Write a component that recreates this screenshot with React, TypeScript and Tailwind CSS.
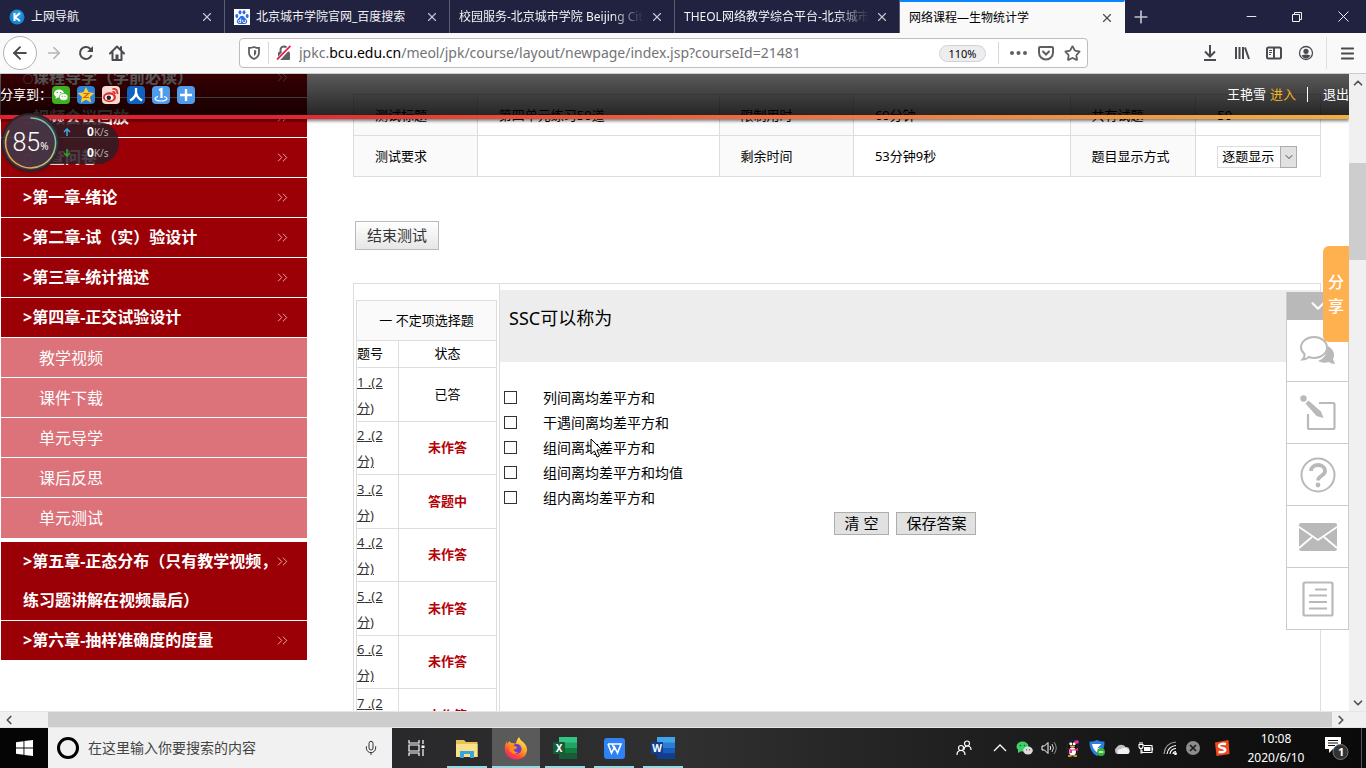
import React, { useState } from 'react';
import {
  ArrowLeft,
  ArrowRight,
  ChevronDown,
  ChevronLeft,
  ChevronRight,
  ChevronUp,
  ChevronsRight,
  Menu,
  Mic,
  Minus,
  Plus,
  Star,
  X,
} from 'lucide-react';

const TABS = [
  { id: 'nav', title: '上网导航', icon: 'k' },
  { id: 'baidu', title: '北京城市学院官网_百度搜索', icon: 'baidu' },
  { id: 'campus', title: '校园服务-北京城市学院 Beijing City' },
  { id: 'theol', title: 'THEOL网络教学综合平台-北京城市' },
  { id: 'course', title: '网络课程—生物统计学' },
];

const MENU_TOP = [
  '○课程导学（学前必读）',
  '○视频会议回放',
  '○调查问卷',
  '>第一章-绪论',
  '>第二章-试（实）验设计',
  '>第三章-统计描述',
  '>第四章-正交试验设计',
];
const MENU_SUB = ['教学视频', '课件下载', '单元导学', '课后反思', '单元测试'];
const MENU_BOTTOM = ['>第五章-正态分布（只有教学视频，练习题讲解在视频最后）', '>第六章-抽样准确度的度量'];

const QUESTIONS = [
  { id: 1, status: '已答' },
  { id: 2, status: '未作答' },
  { id: 3, status: '答题中' },
  { id: 4, status: '未作答' },
  { id: 5, status: '未作答' },
  { id: 6, status: '未作答' },
  { id: 7, status: '未作答' },
];

const OPTIONS = [
  '列间离均差平方和',
  '干遇间离均差平方和',
  '组间离均差平方和',
  '组间离均差平方和均值',
  '组内离均差平方和',
];

function TabIcon({ name }: { name: string }) {
  if (name === 'k') {
    return (
      <svg width="16" height="16" viewBox="0 0 16 16" className="shrink-0">
        <circle cx="8" cy="8" r="7.5" fill="#1787d4" />
        <circle cx="8" cy="6" r="5" fill="#3aa7ea" opacity="0.5" />
        <path d="M5.5 4v8M11 4L6 8.2L11 12" stroke="#fff" strokeWidth="2" fill="none" />
      </svg>
    );
  }
  return (
    <svg width="16" height="16" viewBox="0 0 16 16" className="shrink-0">
      <rect width="16" height="16" fill="#fff" />
      <g fill="#2c6be0">
        <ellipse cx="2.8" cy="7" rx="1.5" ry="2" />
        <ellipse cx="6" cy="3.3" rx="1.5" ry="2.1" />
        <ellipse cx="10" cy="3.3" rx="1.5" ry="2.1" />
        <ellipse cx="13.2" cy="7" rx="1.5" ry="2" />
        <path d="M8 6.800c1.600 0 2.200 1.400 3.400 2.600c1.300 1.200 2.100 2.200 1.700 3.800c-.5 1.800-2.600 1.900-5.100 1.700c-2.500.2-4.600.1-5.100-1.700c-.4-1.600.4-2.600 1.700-3.800C5.800 8.200 6.400 6.800 8 6.800z" />
      </g>
      <path d="M6.700 9.500v4M6.700 11.200h-1.400q-.9 0-.9 1.200t.9 1.100h1.400M8.800 10.900v1.800q0 .8.800.8h1.700v-2.600" stroke="#fff" strokeWidth="0.9" fill="none" />
    </svg>
  );
}

function TabBar() {
  return (
    <div className="h-[33px] shrink-0 bg-[#20223f] flex text-xs text-[#f3f3f6]">
      {TABS.map((tab) => {
        const active = tab.id === 'course';
        return (
          <div
            key={tab.id}
            className={`w-[225px] min-w-0 flex items-center gap-[6px] pl-[9px] pr-[10px] border-r ${
              active ? 'bg-[#f9f9fa] text-black border-t-2 border-t-[#0a84ff] border-r-[#f9f9fa]' : 'border-r-[#5c5d73]'
            }`}
          >
            {tab.icon && <TabIcon name={tab.icon} />}
            <span
              className={`flex-1 overflow-hidden whitespace-nowrap ${
                active || tab.icon ? '' : '[mask-image:linear-gradient(to_right,black_82%,transparent)]'
              }`}
            >
              {tab.title}
            </span>
            <button aria-label="关闭标签页">
              <X size={14} strokeWidth={2} className={active ? 'text-[#4a4a4f]' : 'text-[#c4c4cc]'} />
            </button>
          </div>
        );
      })}
      <button aria-label="新标签页" className="w-8 flex items-center justify-center">
        <Plus size={20} strokeWidth={2} className="text-[#c4c4cc]" />
      </button>
      <div className="ml-auto flex">
        <button aria-label="最小化" className="w-[46px] flex items-center justify-center">
          <Minus size={15} strokeWidth={1.5} />
        </button>
        <button aria-label="还原" className="w-[46px] flex items-center justify-center">
          <svg width="10" height="10" viewBox="0 0 10 10" fill="none" stroke="currentColor">
            <path d="M.5 2.500h7v7h-7zM2.500 2.500v-2h7v7h-2" />
          </svg>
        </button>
        <button aria-label="关闭" className="w-[46px] flex items-center justify-center">
          <svg width="11" height="11" viewBox="0 0 11 11" stroke="currentColor">
            <path d="M.5.5l10 10M10.500.5l-10 10" />
          </svg>
        </button>
      </div>
    </div>
  );
}

function ToolBar() {
  return (
    <div className="h-[41px] shrink-0 bg-[#f9f9fa] border-b border-[#ccc] flex items-center text-[#4a4a4f]">
      <div className="w-[239px] shrink-0 flex items-center gap-4 pl-[3px]">
        <button aria-label="后退" className="size-[34px] rounded-full border border-[#b1b1b1] bg-white flex items-center justify-center">
          <ArrowLeft size={20} strokeWidth={2.3} />
        </button>
        <div className="flex items-center gap-[15px] -ml-2">
          <button aria-label="前进" className="text-[#b5b5b8]">
            <ArrowRight size={18} strokeWidth={2.3} />
          </button>
          <button aria-label="刷新">
            <svg width="16" height="16" viewBox="0 0 16 16" fill="none" stroke="currentColor" strokeWidth="2">
              <path d="M13.600 10.200A6 6 0 1 1 12.200 3.700L14 5.500" />
              <path d="M15 1v6H9z" fill="currentColor" stroke="none" />
            </svg>
          </button>
          <button aria-label="主页">
            <svg width="16" height="16" viewBox="0 0 16 16" fill="none" stroke="currentColor" strokeWidth="2" strokeLinejoin="round" strokeLinecap="round">
              <path d="M1 8.500L8 1.500l7 7M3.500 7.500V15h9V7.500" />
              <path d="M6.500 9.500h3V15h-3z" fill="currentColor" stroke="none" />
              <path d="M12 2v3" />
            </svg>
          </button>
        </div>
      </div>

      <div className="flex-1 min-w-0 h-[30px] bg-white border border-[#bdbdc0] rounded-sm flex items-center pl-[7px]">
        <svg width="14" height="14" viewBox="0 0 14 14" fill="none" stroke="#5f5f63" className="shrink-0">
          <path d="M7 1c2 .8 3.500 1 5 1v4.500c0 3-2 5.200-5 6.500c-3-1.300-5-3.500-5-6.500V2c1.500 0 3-.2 5-1z" strokeWidth="1.800" />
          <path d="M7 4c.8.300 1.500.4 2.200.4v2.100c0 1.500-.8 2.700-2.200 3.500z" fill="#5f5f63" stroke="none" />
        </svg>
        <span className="w-px h-[22px] bg-[#d7d7db] mx-[7px]" />
        <svg width="16" height="16" viewBox="0 0 16 16" fill="none" className="shrink-0">
          <rect x="2" y="7" width="12" height="8" rx="1" fill="#5f5f63" />
          <path d="M4.500 7V5a3.500 3.500 0 0 1 7 0v2" stroke="#5f5f63" strokeWidth="2" />
          <path d="M1.500 15L14.500 1" stroke="#fff" strokeWidth="4" />
          <path d="M1 14.500L14.500 .8" stroke="#e22850" strokeWidth="1.800" />
        </svg>
        {/* the host name is drawn darker than the rest, so the value is shown by the label */}
        <label className="ml-[7px] flex-1 whitespace-nowrap overflow-hidden text-sm text-[#737377]">
          jpkc.<span className="text-black">bcu.edu.cn</span>/meol/jpk/course/layout/newpage/index.jsp?courseId=21481
          <input type="url" className="sr-only" />
        </label>
        <button className="w-[47px] h-[17px] rounded-full border border-[#d2d2d5] bg-[#ededf0] text-[11px] leading-[15px] text-black">110%</button>
        <span className="w-px h-[22px] bg-[#d7d7db] ml-3 mr-[11px]" />
        <button aria-label="更多" className="mr-[7px]">
          <svg width="17" height="4" viewBox="0 0 17 4" fill="#5f5f63">
            <circle cx="2" cy="2" r="2" /><circle cx="8.5" cy="2" r="2" /><circle cx="15" cy="2" r="2" />
          </svg>
        </button>
        <button aria-label="Pocket" className="mx-1">
          <svg width="16" height="15" viewBox="0 0 16 15" fill="none" stroke="#5f5f63" strokeWidth="2" strokeLinecap="round">
            <path d="M2 1h12q1 0 1 1v4.500a7 7 0 0 1-14 0V2q0-1 1-1z" />
            <path d="M5 5.500l3 3l3-3" />
          </svg>
        </button>
        <button aria-label="收藏" className="mx-[6px]">
          <Star size={17} strokeWidth={2.5} className="text-[#5f5f63]" />
        </button>
      </div>

      <div className="flex items-center gap-4 pl-[114px] pr-[10px]">
        <button aria-label="下载">
          <svg width="16" height="16" viewBox="0 0 16 16" fill="none" stroke="currentColor" strokeWidth="2">
            <path d="M8 0v11M3 6.500l5 5l5-5M2 15h12" />
          </svg>
        </button>
        <button aria-label="书库">
          <svg width="16" height="16" viewBox="0 0 16 16" fill="none" stroke="currentColor" strokeWidth="2">
            <path d="M2 2v12M5.500 2v12M9 2v12M11 2.500l4 11.500" />
          </svg>
        </button>
        <button aria-label="侧栏">
          <svg width="16" height="16" viewBox="0 0 16 16" fill="none" stroke="currentColor" strokeWidth="2">
            <rect x="1" y="2.500" width="14" height="11" rx="1.5" />
            <path d="M8 2.500v11" />
            <path d="M3 5.500h3M3 7.500h3M3 9.500h2" strokeWidth="1" />
          </svg>
        </button>
        <button aria-label="账户">
          <svg width="16" height="16" viewBox="0 0 16 16" fill="none">
            <circle cx="8" cy="8" r="6.5" stroke="#4a4a4f" strokeWidth="1.3" />
            <circle cx="8" cy="6.3" r="2.600" fill="#4a4a4f" />
            <path d="M3.500 10.500q4.500-2 9 0q-1.800 3-4.500 3t-4.500-3z" fill="#4a4a4f" />
          </svg>
        </button>
        <div className="flex items-center gap-3 -ml-1">
          <span className="w-px h-8 bg-[#dedee0]" />
          <button aria-label="打开菜单">
            <Menu size={17} strokeWidth={2.6} />
          </button>
        </div>
      </div>
    </div>
  );
}

function MenuRow({ label }: { label: string }) {
  const bullet = label.startsWith('○');
  return (
    <li className="bg-[#9b0007] border-b border-white last:border-b-0">
      <a href="#" className="flex items-start justify-between pl-[22px] pr-4 font-bold text-white">
        <span className="flex-1 -mr-2">
          {bullet && <span className="text-[10px] leading-none font-normal">○</span>}
          {bullet ? label.slice(1) : label}
        </span>
        <ChevronsRight size={17} strokeWidth={1.4} className="mt-[11px] shrink-0 text-[#f0a8a8]" />
      </a>
    </li>
  );
}

function Sidebar() {
  return (
    <nav className="w-[307px] shrink-0 pl-px text-base">
      <ul className="leading-[39px] border-b border-white">
        {MENU_TOP.map((label) => (
          <MenuRow key={label} label={label} />
        ))}
      </ul>
      <ul className="pb-1">
        {MENU_SUB.map((label) => (
          <li key={label} className="h-10 bg-[#dc727a] border-b border-white last:border-b-0">
            <a href="#" className="block pl-[38px] leading-10 text-white">{label}</a>
          </li>
        ))}
      </ul>
      <ul className="leading-[39px]">
        {MENU_BOTTOM.map((label) => (
          <MenuRow key={label} label={label} />
        ))}
      </ul>
    </nav>
  );
}

function InfoTable() {
  const label = 'border border-[#ddd] bg-[#fafafa] pl-[21px] pt-[2px] font-normal text-left';
  const value = 'border border-[#ddd] pl-[21px] pt-[2px]';
  return (
    <table className="w-full table-fixed border-collapse text-[13px]">
      <colgroup>
        <col className="w-[12.8%]" />
        <col className="w-1/4" />
        <col className="w-[13.9%]" />
        <col className="w-[22.4%]" />
        <col className="w-[13%]" />
        <col />
      </colgroup>
      <tbody>
        <tr className="h-[41px]">
          <th className={label}>测试标题</th>
          <td className={value}>第四单元练习50道</td>
          <th className={label}>限制用时</th>
          <td className={value}>60分钟</td>
          <th className={label}>共有试题</th>
          <td className={value}>50</td>
        </tr>
        <tr className="h-[41px]">
          <th className={label}>测试要求</th>
          <td className={value} />
          <th className={label}>剩余时间</th>
          <td className={value}>53分钟9秒</td>
          <th className={label}>题目显示方式</th>
          <td className={value}>
            <div className="relative w-20 h-[22px]">
              <select aria-label="题目显示方式" className="appearance-none w-full h-full border border-[#ddd] bg-white pl-1">
                <option>逐题显示</option>
                <option>全部显示</option>
              </select>
              <span className="absolute right-0 top-0 w-[17px] h-full border border-[#adadad] bg-[#e1e1e1] flex items-center justify-center pointer-events-none">
                <ChevronDown size={12} strokeWidth={2} className="text-[#444]" />
              </span>
            </div>
          </td>
        </tr>
      </tbody>
    </table>
  );
}

function QuestionList() {
  return (
    <table className="w-[141px] table-fixed border-collapse text-[13px]">
      <colgroup>
        <col className="w-[42px]" />
        <col />
      </colgroup>
      <thead>
        <tr className="h-10">
          <th colSpan={2} className="border border-[#ddd] bg-[#fafafa] font-normal">一 不定项选择题</th>
        </tr>
        <tr className="h-[27px]">
          <th className="border border-[#ddd] font-normal text-left">题号</th>
          <th className="border border-[#ddd] font-normal">状态</th>
        </tr>
      </thead>
      <tbody>
        {QUESTIONS.map((q) => (
          <tr key={q.id} className="odd:h-[54px] even:h-[53px]">
            <td className="border border-[#ddd] leading-[26px]">
              <a href="#" className="underline text-[#333]">{q.id} .(2<br />分)</a>
            </td>
            <td className={`border border-[#ddd] text-center ${q.status === '已答' ? '' : 'font-bold text-[#b50006]'}`}>
              {q.status}
            </td>
          </tr>
        ))}
      </tbody>
    </table>
  );
}

function TestPanel() {
  const [checked, setChecked] = useState<string[]>([]);

  const toggle = (option: string) =>
    setChecked((prev) => (prev.includes(option) ? prev.filter((o) => o !== option) : [...prev, option]));

  return (
    <section className="mt-[33px] flex border border-[#ddd]">
      <div className="shrink-0 border-r border-[#ddd] pt-4 px-[2px]">
        <QuestionList />
      </div>
      <div className="flex-1 pt-[6px]">
        <h2 className="h-[72px] bg-[#ededed] pl-[9px] pt-[15px] text-lg leading-[26px]">SSC可以称为</h2>
        <div className="mt-[23px] pl-1 text-sm">
          {OPTIONS.map((option) => (
            <label key={option} className="h-[25px] flex items-center gap-[26px]">
              <input
                type="checkbox"
                className="appearance-none size-[13px] border border-[#333] bg-white checked:bg-[#333]"
                checked={checked.includes(option)}
                onChange={() => toggle(option)}
              />
              {option}
            </label>
          ))}
        </div>
        <div className="mt-[2px] pr-[10px] flex justify-center gap-[7px] text-[15px] leading-[21px]">
          <button onClick={() => setChecked([])} className="border border-[#adadad] bg-[#e1e1e1] px-[10px]">清 空</button>
          <button className="border border-[#adadad] bg-[#e1e1e1] px-[9px]">保存答案</button>
        </div>
      </div>
    </section>
  );
}

function ShareIcons() {
  const box = 'size-[18px] rounded-sm overflow-hidden';
  return (
    <div className="flex gap-[7px]">
      <svg viewBox="0 0 18 18" className={box}>
        <rect width="18" height="18" fill="#3eb022" />
        <ellipse cx="7" cy="7.5" rx="5" ry="4" fill="#fff" /><path d="M4 10l-.5 3l3-2z" fill="#fff" />
        <ellipse cx="11.7" cy="11" rx="4.3" ry="3.5" fill="#fff" stroke="#3eb022" strokeWidth=".7" />
        <g fill="#3eb022"><circle cx="5.3" cy="6.5" r=".8" /><circle cx="8.6" cy="6.5" r=".8" /><circle cx="10.3" cy="10.3" r=".6" /><circle cx="13" cy="10.3" r=".6" /></g>
      </svg>
      <svg viewBox="0 0 18 18" className={box}>
        <rect width="18" height="18" fill="#2b82d9" />
        <path d="M9 1l2.500 5.300l5.800.7l-4.300 3.900l1.200 5.800L9 13.800l-5.200 2.900l1.200-5.800L.7 7l5.800-.7z" fill="#fc3" />
        <path d="M6.500 7.500h5L7 11.500h5" stroke="#c86a10" strokeWidth="1.2" fill="none" />
      </svg>
      <svg viewBox="0 0 18 18" className={box}>
        <rect width="18" height="18" fill="#f6dad3" />
        <ellipse cx="7.5" cy="11.3" rx="6.500" ry="5" fill="#e0332c" />
        <ellipse cx="7.3" cy="11.5" rx="4.3" ry="3" fill="#fff" />
        <circle cx="6.8" cy="11.7" r="2.200" fill="#222" />
        <path d="M10.500 3q5-1 5 5M10.500 6q2.500-.5 2.500 2" stroke="#e0332c" strokeWidth="1.8" fill="none" />
      </svg>
      <svg viewBox="0 0 18 18" className={box}>
        <rect width="18" height="18" fill="#0f62c0" />
        <path d="M9 2v5q-.5 4.500-6 7.500M9.200 7q1 5 5.800 7.500" stroke="#fff" strokeWidth="2.3" fill="none" />
      </svg>
      <svg viewBox="0 0 18 18" className={box}>
        <rect width="18" height="18" fill="#4f9bec" />
        <path d="M7 4l2.500-1v9" stroke="#fff" strokeWidth="2.2" fill="none" />
        <path d="M6 10.500q-3 .8-3 2.200q.3 2.300 6 2.300t6-2.300q0-1.400-3-2.200" stroke="#fff" strokeWidth="1.2" fill="none" />
      </svg>
      <svg viewBox="0 0 18 18" className={box}>
        <rect width="18" height="18" fill="#4f9bec" />
        <path d="M9 3v12M3 9h12" stroke="#fff" strokeWidth="2.4" />
      </svg>
    </div>
  );
}

function PageHeader() {
  return (
    <header className="absolute inset-x-0 top-0 z-10 shadow-[0_2px_3px_rgba(0,0,0,0.5)]">
      <div className="h-[41px] bg-linear-to-b from-black/65 to-black/85 flex items-center justify-between overflow-hidden text-[13px] text-white">
        <div className="flex items-center">
          <span>分享到：</span>
          <ShareIcons />
        </div>
        <div className="flex items-center whitespace-nowrap">
          <span>王艳雪</span>
          <a href="#" className="ml-1 text-[#f5b324]">进入</a>
          <span className="w-px h-[15px] bg-white ml-[11px] mr-[15px]" />
          <a href="#">退出</a>
        </div>
      </div>
      <div className="h-1 bg-linear-to-r from-[#dc2430] from-20% via-[#f2703f] via-60% to-[#f0b040]" />
    </header>
  );
}

function SpeedWidget() {
  return (
    <div className="absolute left-px top-[39px] z-20 flex items-center text-white">
      <div className="relative z-10 size-[59px] rounded-full bg-[#463445]/95 border-2 border-[#2c222c] flex items-center justify-center shadow-md">
        <svg viewBox="0 0 54 54" className="absolute inset-0" fill="none" strokeWidth="1.5">
          <defs>
            <linearGradient id="ring" x1="0" y1="1" x2="1" y2="0">
              <stop offset="0" stopColor="#f0a040" />
              <stop offset="0.5" stopColor="#b8c870" />
              <stop offset="1" stopColor="#48c8c0" />
            </linearGradient>
          </defs>
          <path d="M27 3a24.500 24.500 0 1 1-21 12" stroke="url(#ring)" />
        </svg>
        <span className="font-['Roboto'] font-light text-[25px]">85</span>
        <span className="mt-2 text-[10px]">%</span>
      </div>
      <div className="-ml-7 w-[87px] h-[42px] rounded-r-full bg-[#2c1c26]/85 pl-[31px] flex flex-col justify-center">
        {['up', 'down'].map((dir) => (
          <div key={dir} className="h-[21px] flex items-center">
            <svg width="8" height="8" viewBox="0 0 8 8" fill="none" strokeWidth="1.5" className={dir === 'up' ? 'text-[#3ba7e6]' : 'text-[#2ba82b] rotate-180'}>
              <path d="M4 8V1M1 4l3-3l3 3" stroke="currentColor" />
            </svg>
            <span className="ml-4 text-xs font-bold">0</span>
            <span className="text-[10px] text-[#b5adb3]">K/s</span>
          </div>
        ))}
      </div>
    </div>
  );
}

function SideTools() {
  const cell = 'h-[62px] border-b border-[#ccc] flex items-center justify-center';
  return (
    <div className="absolute right-0 top-[218px] w-[63px] bg-white border-x border-[#ccc] text-[#b9b9b9]">
      <button aria-label="收起" className="w-full h-7 bg-[#b9b9b9] text-white flex items-center justify-center">
        <ChevronDown size={22} strokeWidth={2.2} />
      </button>
      <a href="#" aria-label="讨论" className={cell}>
        <svg width="36" height="32" viewBox="0 0 36 32" fill="none">
          <path d="M28 11q9 6 5 13l2 5q-4 0-6-2q-6 2-11-1q9-3 10-15z" fill="currentColor" />
          <path d="M14 2c7 0 13 4.500 13 10.500S21 23 14 23q-3 0-5-1q-3 2.500-6.500 2.500Q5 22 4.500 19Q1 16 1 12.500C1 6.500 7 2 14 2z" fill="#fff" stroke="currentColor" strokeWidth="2" />
        </svg>
      </a>
      <a href="#" aria-label="作业" className={cell}>
        <svg width="36" height="36" viewBox="0 0 36 36" fill="none">
          <path d="M19 8h14q1.500 0 1.500 1.500v23q0 1.500-1.500 1.500H9.500Q8 34 8 32.500V19" stroke="currentColor" strokeWidth="2.2" />
          <path d="M5.500 8.500l3-3l12.500 11l2.500 6.500l-7-2z" fill="currentColor" />
          <circle cx="3.5" cy="3.5" r="3.2" fill="currentColor" />
        </svg>
      </a>
      <a href="#" aria-label="帮助" className={cell}>
        <svg width="36" height="36" viewBox="0 0 36 36" fill="none" stroke="currentColor">
          <circle cx="18" cy="18" r="16.5" strokeWidth="2" />
          <path d="M11 14c0-8 14-8 14 0c0 5-7 4.500-7 9.500" strokeWidth="3.8" />
          <circle cx="18" cy="28" r="2.4" fill="currentColor" stroke="none" />
        </svg>
      </a>
      <a href="#" aria-label="邮件" className={cell}>
        <svg width="38" height="28" viewBox="0 0 38 28" fill="none">
          <rect width="38" height="28" rx="2" fill="currentColor" />
          <path d="M0 4l19 13L38 4M0 25l13-11M38 25L25 14" stroke="#fff" strokeWidth="1.8" />
        </svg>
      </a>
      <a href="#" aria-label="笔记" className={cell}>
        <svg width="32" height="36" viewBox="0 0 32 36" fill="none" stroke="currentColor" strokeWidth="2">
          <rect x="1.5" y="1.5" width="29" height="33" rx="1.5" strokeWidth="2.2" />
          <path d="M13 8.500h12M7 14.500h18M7 21h18M7 27.500h18" />
        </svg>
      </a>
      <button className="absolute -right-px -top-[46px] w-[26px] h-24 rounded-l-md bg-[#ffb04f] text-white text-base leading-6 font-medium flex flex-col items-center justify-center">
        <span>分</span>
        <span>享</span>
      </button>
    </div>
  );
}

function VerticalScroll() {
  return (
    <div className="w-[17px] shrink-0 bg-[#f0f0f0] flex flex-col items-center text-[#505050]">
      <button aria-label="向上滚动" className="h-[17px] flex items-center"><ChevronUp size={14} strokeWidth={3} /></button>
      <div className="flex-1 w-full">
        <div className="h-[12%]" />
        <div className="h-[16%] bg-[#cdcdcd]" />
      </div>
      <button aria-label="向下滚动" className="h-[17px] flex items-center"><ChevronDown size={14} strokeWidth={3} /></button>
    </div>
  );
}

function HorizontalScroll() {
  return (
    <div className="h-[17px] shrink-0 bg-[#f0f0f0] border-y border-y-[#e6e6e6] flex items-center text-[#505050] pr-[17px]">
      <button aria-label="向左滚动" className="w-[17px] flex justify-center"><ChevronLeft size={14} strokeWidth={3} /></button>
      <div className="flex-1 h-full pl-[31px]">
        <div className="h-full bg-[#cdcdcd]" />
      </div>
      <button aria-label="向右滚动" className="w-[17px] flex justify-center"><ChevronRight size={14} strokeWidth={3} /></button>
    </div>
  );
}

// Excel and Word share the same tile, only the shades and the letter change
function OfficeIcon({ letter, shades }: { letter: string; shades: string[] }) {
  return (
    <svg width="24" height="22" viewBox="0 0 24 22">
      <rect x="6" y="0" width="18" height="6" fill={shades[0]} />
      <rect x="6" y="5.5" width="18" height="5.5" fill={shades[1]} />
      <rect x="6" y="11" width="18" height="5.5" fill={shades[2]} />
      <rect x="6" y="16.5" width="18" height="5.5" fill={shades[3]} />
      <rect x="0" y="5" width="12" height="12" rx="1" fill={shades[3]} />
      <text x="6" y="14.5" textAnchor="middle" fontSize="10" fontWeight="bold" fill="#fff">{letter}</text>
    </svg>
  );
}

function FirefoxIcon() {
  return (
    <svg width="24" height="24" viewBox="0 0 24 24">
      <defs>
        <linearGradient id="fox" x1="0.8" y1="0" x2="0.2" y2="1">
          <stop offset="0.1" stopColor="#ffe14a" />
          <stop offset="0.45" stopColor="#ff9a20" />
          <stop offset="0.75" stopColor="#ff4040" />
          <stop offset="1" stopColor="#e8208a" />
        </linearGradient>
      </defs>
      <path d="M15 1q1 3 4 5q4.500 4 4 9q-1.500 8-10.500 8.500Q2 23 .8 13.500Q.5 9 3 5v3l2.500-3q.5 1.500 2 2q3 0 4 1q1-4 3.500-7z" fill="url(#fox)" />
      <circle cx="12.5" cy="13" r="5" fill="#6b3fc4" />
      <path d="M5 10q3-2 6 0l2.500 1.500q-1 2-4 2q1 3 4.500 2.500q-4.500 4-8-.5q-1.500-2.500-1-5.500z" fill="#ff8a20" />
    </svg>
  );
}

function Tray() {
  return (
    <div className="flex items-center gap-2 text-white">
      <svg width="16" height="16" viewBox="0 0 16 16" fill="none" stroke="currentColor" strokeWidth="1.2" className="mr-3">
        <circle cx="11" cy="3.5" r="2.5" /><path d="M8 10q0-4 3.500-4T15 10" />
        <circle cx="5" cy="8" r="2.5" /><path d="M1 15q0-4.500 4-4.500T9 15" />
      </svg>
      <svg width="16" height="8" viewBox="0 0 16 8" fill="none" stroke="currentColor" strokeWidth="1.3">
        <path d="M2 7l6-6l6 6" />
      </svg>
      <svg width="17" height="14" viewBox="0 0 17 14">
        <ellipse cx="6.5" cy="5.5" rx="6" ry="5" fill="#3fd06a" />
        <path d="M2 8.500L2 12l3.500-2z" fill="#3fd06a" />
        <ellipse cx="12" cy="9.5" rx="4.8" ry="4" fill="#dcdcdc" />
        <g fill="#1a5a2c"><circle cx="4.5" cy="4.5" r=".8" /><circle cx="8.5" cy="4.5" r=".8" /><circle cx="10.5" cy="8.8" r=".6" /><circle cx="13.5" cy="8.8" r=".6" /></g>
      </svg>
      <svg width="16" height="14" viewBox="0 0 16 14" fill="none" stroke="currentColor">
        <path d="M1 5h2.500L7 1.500v11L3.500 9H1z" />
        <path d="M9 5q1.500 2 0 4" /><path d="M11 3q3 4 0 8" opacity=".8" /><path d="M13 1q4.500 6 0 12" opacity=".5" />
      </svg>
      <svg width="16" height="17" viewBox="0 0 16 17">
        <ellipse cx="7.5" cy="8.5" rx="5.5" ry="8" fill="#111" stroke="#444" strokeWidth=".5" />
        <ellipse cx="7.5" cy="11.5" rx="3.5" ry="4" fill="#fff" />
        <circle cx="5.8" cy="3.8" r="1.5" fill="#fff" /><circle cx="9.2" cy="3.8" r="1.5" fill="#fff" />
        <ellipse cx="7.5" cy="6.5" rx="2.5" ry=".9" fill="#ffb020" />
        <path d="M2 8q5.500 3 11 0v2.500H7V13H4.500v-3z" fill="#ee2ba0" />
        <path d="M9 1l4-1l1 3l-3 1z" fill="#ee2ba0" />
        <path d="M3 16h3.500M8.500 16H12" stroke="#ffb020" strokeWidth="1.5" />
      </svg>
      <svg width="16" height="16" viewBox="0 0 16 16">
        <path d="M8 0q4 2 7.500 1.500Q16 12 8 16Q0 12 .5 1.500Q4 2 8 0z" fill="#2b7de0" />
        <path d="M3 4h9.500L8 8.500l4-1q-1.500 3.500-4 5Q4 9.500 3 4z" fill="#fff" />
        <circle cx="12" cy="12" r="4" fill="#35b535" /><path d="M9.800 12h4.400" stroke="#fff" strokeWidth="1.3" />
      </svg>
      <svg width="17" height="11" viewBox="0 0 17 11">
        <path d="M4 11a4 4 0 0 1 0-7a5 5 0 0 1 8.500 0a3.500 3.500 0 0 1 1 7z" fill="#bfbfbf" />
        <path d="M5 11q-2-5 3-5q4-3 8 1q1.500 4-2 4z" fill="#f3f3f3" />
      </svg>
      <svg width="16" height="13" viewBox="0 0 16 13" fill="none" stroke="currentColor" strokeWidth="1.1">
        <path d="M5.500 3.500H14v7H4V8M14.500 5.500v3" /><path d="M6 5h6.500v4H6z" fill="currentColor" stroke="none" />
        <path d="M1 2.500h4v2q0 2-2 2t-2-2zM2 0v2.500M4 0v2.500M3 6.500V11h1.500" />
      </svg>
      <svg width="14" height="14" viewBox="0 0 14 14" fill="none" stroke="currentColor" strokeWidth="1.2" className="mx-px">
        <path d="M1 13Q2 2 13 1" opacity=".6" /><path d="M4 13q1-7.500 9-8.500M7 13q.5-5 6-5.500M10 13q.3-2.500 3-2.500" />
        <circle cx="12.5" cy="12.7" r=".8" fill="currentColor" />
      </svg>
      <svg width="14" height="14" viewBox="0 0 14 14">
        <circle cx="7" cy="7" r="7" fill="#8d8d8d" /><path d="M4 4l6 6M10 4l-6 6" stroke="#1c1c1c" strokeWidth="1.7" />
      </svg>
      <svg width="16" height="16" viewBox="0 0 16 16" className="ml-[6px]">
        <path d="M1 2.500L14.500 0L15.500 14L2.500 16z" fill="#ee4a1c" />
        <path d="M12 4Q5 3 5 6q.3 1.500 3.500 2q3 .5 2.800 2.300Q10.500 12.500 4.500 12" stroke="#fff" strokeWidth="2.3" fill="none" />
      </svg>
    </div>
  );
}

function TaskBar() {
  const app = 'h-full w-10 flex items-center justify-center border-b-2 border-[#8fdbe3] pt-[2px]';
  return (
    <div className="h-10 shrink-0 flex items-center bg-linear-to-r from-[#1f1d20] via-[#303031] to-[#0a0a0a] text-white">
      <button aria-label="开始" className="w-12 h-full bg-[#050505] flex items-center justify-center">
        <svg width="17" height="16" viewBox="0 0 17 16" fill="#fff">
          <path d="M0 2.200L7.500 1.200V7.600H0zM8.400 1L17 0V7.600H8.400zM0 8.400h7.500v6.400L0 13.800zM8.400 8.400H17V16l-8.600-1.100z" />
        </svg>
      </button>
      <label className="w-[344px] h-full bg-[#f1f1f1] text-[#333] flex items-center pl-[9px] pr-[13px] gap-[9px] text-sm">
        <span className="size-[22px] rounded-full border-3 border-black shrink-0" />
        <input
          aria-label="搜索"
          placeholder="在这里输入你要搜索的内容"
          className="flex-1 min-w-0 bg-transparent outline-none placeholder:text-[#444]"
        />
        <Mic size={16} strokeWidth={1.5} />
      </label>
      <button aria-label="任务视图" className="w-12 flex justify-center">
        <svg width="17" height="16" viewBox="0 0 17 16" fill="none" stroke="#fff" strokeWidth="1.2">
          <path d="M1 0v3h10V0M1 5h10v6H1zM1 16v-3h10v3M15 0v4M15 9v7" /><path d="M13.500 5.500h3v2.500h-3z" fill="#fff" stroke="none" />
        </svg>
      </button>
      <div className="h-full flex items-center ml-[7px]">
        <button aria-label="文件资源管理器" className={`${app} mr-[5px]`}>
          <svg width="22" height="19" viewBox="0 0 22 19">
            <path d="M0 1h8l2 2h11.500v15H0z" fill="#e8c252" /><path d="M0 5h21.500v13H0z" fill="#fbe08c" />
            <path d="M4 19v-7h14v7h-4v-4H8v4z" fill="#36a5dc" />
          </svg>
        </button>
        <button aria-label="Firefox" className="h-full w-12 flex items-center justify-center border-b-2 border-[#8fdbe3] pt-[2px] bg-[#5a5a5b]">
          <FirefoxIcon />
        </button>
        <div className="h-full flex gap-[9px] ml-[5px]">
          <button aria-label="Excel" className={app}>
            <OfficeIcon letter="X" shades={['#33c481', '#21a366', '#107c41', '#185c37']} />
          </button>
          <button aria-label="WPS" className={app}>
            <svg width="21" height="21" viewBox="0 0 21 21" fill="none">
              <rect width="21" height="21" rx="3" fill="#2e82f6" />
              <path d="M4 6h13l-3.500 9L10.500 9L7.500 15L4 6M8 6l3 6" stroke="#fff" strokeWidth="1.6" />
            </svg>
          </button>
          <button aria-label="Word" className={app}>
            <OfficeIcon letter="W" shades={['#41a5ee', '#2b7cd3', '#185abd', '#103f91']} />
          </button>
        </div>
      </div>
      <div className="ml-auto h-full flex items-center">
        <Tray />
        <div className="ml-[15px] w-[62px] text-center text-xs leading-[19px]">
          10:08<br />2020/6/10
        </div>
        <button aria-label="通知" className="relative ml-[18px] mr-3">
          <svg width="24" height="24" viewBox="0 0 24 24">
            <path d="M0 1h16v12H8l-4 4v-4H0z" fill="#fff" /><path d="M3 4.500h10M3 7h10M3 9.500h7" stroke="#111" />
            <circle cx="15.5" cy="16" r="7.5" fill="#333" stroke="#777" />
          </svg>
          <span className="absolute left-[13px] top-2 text-[11px] leading-4 font-bold">1</span>
        </button>
        <span className="w-px h-full bg-[#555] mr-1" />
      </div>
    </div>
  );
}

export default function App() {
  return (
    <div className="h-screen flex flex-col overflow-hidden bg-white text-black font-['Noto_Sans','Noto_Sans_CJK_SC',sans-serif]">
      <TabBar />
      <ToolBar />
      <div className="flex-1 min-h-0 flex">
        <div className="relative flex-1 min-w-0 overflow-hidden">
          <div className="-mt-4 flex">
            <Sidebar />
            <main className="flex-1 min-w-0 pt-9 pl-[46px] pr-7">
              <InfoTable />
              <button className="mt-[44px] ml-[2px] h-[29px] px-[11px] block border border-[#bbb] bg-linear-to-b from-white to-[#e6e6e6] text-[15px] text-[#333]">
                结束测试
              </button>
              <TestPanel />
            </main>
          </div>
          <PageHeader />
          <SpeedWidget />
          <SideTools />
          <svg width="13" height="20" viewBox="0 0 13 20" className="absolute left-[590px] top-[364px]">
            <path d="M1 1v15l3.500-3l2.500 6l2.500-1l-2.500-6h5z" fill="#fff" stroke="#000" />
          </svg>
        </div>
        <VerticalScroll />
      </div>
      <HorizontalScroll />
      <TaskBar />
    </div>
  );
}
